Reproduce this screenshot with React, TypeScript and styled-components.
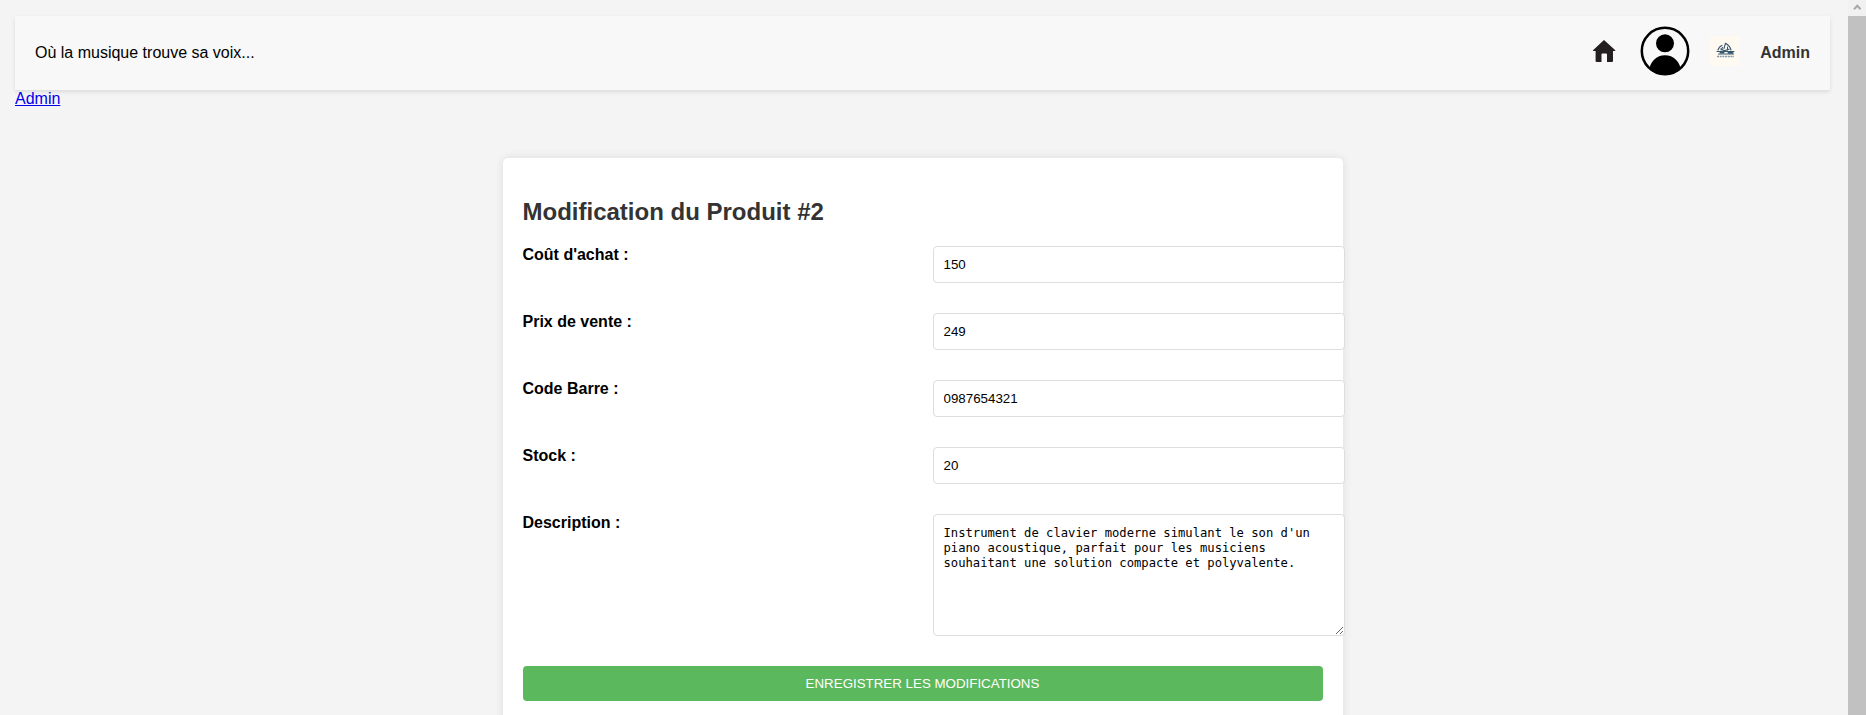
import React from 'react';
import styled, { createGlobalStyle } from 'styled-components';

const GlobalStyle = createGlobalStyle`
  body {
    margin: 0;
    background: #f4f4f4;
    color: #000;
    font: 16px/18px "Liberation Sans", Arial, sans-serif;
  }
`;

const Screen = styled.div`
  display: flex;
  height: 100vh;
  overflow: hidden;
`;

const Page = styled.div`
  flex: 1;
  min-width: 0;
  box-sizing: border-box;
  padding: 16px 18px 0 15px;
`;

const Header = styled.header`
  display: flex;
  align-items: center;
  justify-content: space-between;
  box-sizing: border-box;
  height: 74px;
  padding: 0 20px;
  background: #f8f8f8;
  box-shadow: 0 2px 4px rgba(0, 0, 0, 0.1);
`;

const Slogan = styled.p`
  margin: 0;
  padding-bottom: 1px;
`;

const HeaderNav = styled.nav`
  display: flex;
  align-items: center;
`;

const HomeIcon = styled.svg`
  width: 24px;
  height: 24px;
  margin: 0 24px 4px 0;
`;

const UserIcon = styled.svg`
  width: 50px;
  height: 50px;
  margin: 0 20px 4px 0;
`;

const Logo = styled.svg`
  width: 30px;
  height: 30px;
  margin: 0 20px 4px 0;
`;

const UserName = styled.span`
  padding-bottom: 1px;
  color: #333;
  font-weight: bold;
`;

const AdminLink = styled.a`
  display: block;
  width: fit-content;
  color: #0000ee;
`;

const Card = styled.main`
  box-sizing: border-box;
  width: 840px;
  height: 620px;
  margin: 50px auto 0;
  padding: 40px 20px 20px;
  background: #fff;
  border-radius: 5px;
  box-shadow: 0 0 10px rgba(0, 0, 0, 0.1);
`;

const Title = styled.h2`
  margin: 0 0 20px;
  color: #333;
  font-size: 24px;
  line-height: 28px;
`;

const Form = styled.form`
  display: flex;
  flex-direction: column;
  gap: 30px;
`;

const Row = styled.div`
  display: grid;
  grid-template-columns: 390px 390px;
  column-gap: 20px;
  align-items: start;
`;

const Label = styled.label`
  font-weight: bold;
`;

const Input = styled.input`
  box-sizing: border-box;
  width: 412px;
  height: 37px;
  padding: 10px;
  border: 1px solid #ddd;
  border-radius: 4px;
  color: #000;
  font: 13.333px "Liberation Sans", Arial, sans-serif;
`;

const TextArea = styled.textarea`
  box-sizing: border-box;
  display: block;
  width: 412px;
  height: 122px;
  padding: 11px 10px 9px;
  border: 1px solid #ddd;
  border-radius: 4px;
  color: #000;
  font: 12.18px/15px Consolas, "DejaVu Sans Mono", monospace;
`;

const SaveButton = styled.button`
  height: 35px;
  padding: 0 0 1px;
  border: 0;
  border-radius: 4px;
  background: #5cb85c;
  color: #fff;
  font: 13.333px "Liberation Sans", Arial, sans-serif;
  text-transform: uppercase;
`;

const ScrollTrack = styled.div`
  display: flex;
  flex-direction: column;
  width: 18px;
  background: #f1f1f1;
`;

const ScrollUp = styled.svg`
  width: 18px;
  height: 16px;
`;

const ScrollThumb = styled.div`
  flex: 1;
  background: #c1c1c1;
`;

const fields = [
  { id: 'cout', label: "Coût d'achat :", value: '150' },
  { id: 'prix', label: 'Prix de vente :', value: '249' },
  { id: 'code', label: 'Code Barre :', value: '0987654321' },
  { id: 'stock', label: 'Stock :', value: '20' },
];

export default function App() {
  return (
    <Screen>
      <GlobalStyle />
      <Page>
        <Header>
          <Slogan>Où la musique trouve sa voix...</Slogan>
          <HeaderNav>
            <HomeIcon viewBox="0 0 24 24" fill="#231f20">
              <path d="M12 1 23.3 11.2Q23.6 12 22.8 12H21V22Q21 23 20 23H15V15.3Q15 14.5 14.2 14.5H10.3Q9.5 14.5 9.5 15.3V23H4.6Q3.6 23 3.6 22V12H1.5Q.7 12 1 11.2Z" />
            </HomeIcon>
            <UserIcon viewBox="0 0 50 50">
              <clipPath id="disc">
                <circle cx="25" cy="25" r="24" />
              </clipPath>
              <circle cx="25" cy="25" r="23.2" fill="none" stroke="#000" strokeWidth="2.5" />
              <circle cx="25" cy="17.3" r="9" />
              <ellipse cx="25" cy="44.5" rx="15.5" ry="15.3" clipPath="url(#disc)" />
            </UserIcon>
            <Logo viewBox="0 0 30 30">
              <path fill="#fffaf1" d="M0 0h30v30H0z" />
              <g fill="none" stroke="#38566f" strokeLinecap="round">
                <path strokeWidth="1.1" d="M8 14Q9 10.5 12 9.5M11 14l1.5-2.5M15.5 7.2 14 12.5M16 7.5Q20 10 21 14M17.5 11v3" />
                <path strokeWidth="1.1" d="M7 15.5h17M8.5 18h15M11 12.8l3 2 5-1.5" />
                <path strokeWidth="1.9" d="M10.5 16.6h3M18.5 16.8h4" />
              </g>
              <path stroke="#8797a3" strokeWidth="1.5" strokeDasharray="2 .7" d="M7 20.6h17" />
            </Logo>
            <UserName>Admin</UserName>
          </HeaderNav>
        </Header>
        <AdminLink href="#">Admin</AdminLink>
        <Card>
          <Title>Modification du Produit #2</Title>
          <Form>
            {fields.map((field) => (
              <Row key={field.id}>
                <Label htmlFor={field.id}>{field.label}</Label>
                <Input id={field.id} defaultValue={field.value} />
              </Row>
            ))}
            <Row>
              <Label htmlFor="description">Description :</Label>
              <TextArea
                id="description"
                spellCheck={false}
                defaultValue="Instrument de clavier moderne simulant le son d'un piano acoustique, parfait pour les musiciens souhaitant une solution compacte et polyvalente."
              />
            </Row>
            <SaveButton type="button">Enregistrer les modifications</SaveButton>
          </Form>
        </Card>
      </Page>
      <ScrollTrack>
        <ScrollUp viewBox="0 0 18 16">
          <path d="M6 9.2 9.3 5.8 12.6 9.2" fill="none" stroke="#a9a9a9" strokeWidth="2" />
        </ScrollUp>
        <ScrollThumb />
      </ScrollTrack>
    </Screen>
  );
}
